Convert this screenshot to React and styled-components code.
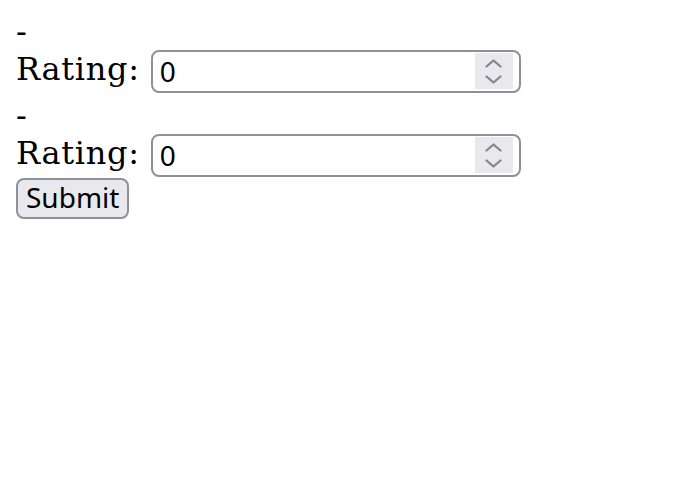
import React, { useState } from 'react';
import styled, { createGlobalStyle } from 'styled-components';

const GlobalStyle = createGlobalStyle`
  body {
    margin: 0;
    background: #ffffff;
    color: #000000;
    font-family: "DejaVu Serif", serif;
    font-size: 32px;
  }
`;

const Form = styled.form`
  display: flex;
  flex-direction: column;
  align-items: flex-start;
  padding: 11px 16px;
`;

const Entry = styled.div`
  display: flex;
  flex-direction: column;
`;

const DashLine = styled.div`
  height: 36px;
  line-height: 40px;
`;

const RatingRow = styled.label`
  display: flex;
  align-items: center;
  height: 48px;
`;

const LabelText = styled.span`
  line-height: 37px;
  letter-spacing: 0.7px;
  padding-bottom: 3px;
  margin-right: 11px;
`;

const InputFrame = styled.div`
  box-sizing: border-box;
  display: flex;
  align-items: center;
  width: 370px;
  height: 43px;
  padding: 0 6px 0 7px;
  border: 2px solid #8f8f9d;
  border-radius: 8px;
  background: #ffffff;
`;

const NumberField = styled.input`
  flex: 1;
  min-width: 0;
  border: none;
  outline: none;
  padding: 0;
  background: transparent;
  font-family: "Noto Sans", sans-serif;
  font-size: 28px;
  color: #000000;
  -moz-appearance: textfield;

  &::-webkit-outer-spin-button,
  &::-webkit-inner-spin-button {
    -webkit-appearance: none;
    margin: 0;
  }
`;

const SpinBox = styled.div`
  display: flex;
  flex-direction: column;
  align-items: center;
  justify-content: center;
  gap: 7px;
  width: 38px;
  height: 36px;
  background: #e9e9ed;
`;

const SpinArrow = styled.svg`
  display: block;
  width: 17px;
  height: 9px;
  cursor: pointer;
`;

const SubmitButton = styled.button`
  box-sizing: border-box;
  height: 41px;
  padding: 0 8px 3px;
  border: 2px solid #8f8f9d;
  border-radius: 8px;
  background: #e9e9ed;
  color: #000000;
  font-family: "Noto Sans", sans-serif;
  font-size: 28px;
  line-height: 1;
  margin-top: -1px;
`;

const Chevron = ({ up, onClick }) => (
  <SpinArrow viewBox="0 0 17 9" onClick={onClick}>
    <path
      d={up ? 'M1.5 7.5 L8.5 1.5 L15.5 7.5' : 'M1.5 1.5 L8.5 7.5 L15.5 1.5'}
      fill="none"
      stroke="#858494"
      strokeWidth="2.3"
      strokeLinecap="round"
      strokeLinejoin="round"
    />
  </SpinArrow>
);

const App = () => {
  const [ratings, setRatings] = useState([0, 0]);

  const setRating = (index, value) => {
    const next = [...ratings];
    next[index] = value;
    setRatings(next);
  };

  return (
    <>
      <GlobalStyle />
      <Form onSubmit={(e) => e.preventDefault()}>
        {ratings.map((rating, index) => (
          <Entry key={index}>
            <DashLine>-</DashLine>
            <RatingRow>
              <LabelText>Rating:</LabelText>
              <InputFrame>
                <NumberField
                  type="number"
                  value={rating}
                  onChange={(e) => setRating(index, e.target.value)}
                />
                <SpinBox>
                  <Chevron up onClick={() => setRating(index, Number(rating) + 1)} />
                  <Chevron onClick={() => setRating(index, Number(rating) - 1)} />
                </SpinBox>
              </InputFrame>
            </RatingRow>
          </Entry>
        ))}
        <SubmitButton type="submit">Submit</SubmitButton>
      </Form>
    </>
  );
};

export default App;
